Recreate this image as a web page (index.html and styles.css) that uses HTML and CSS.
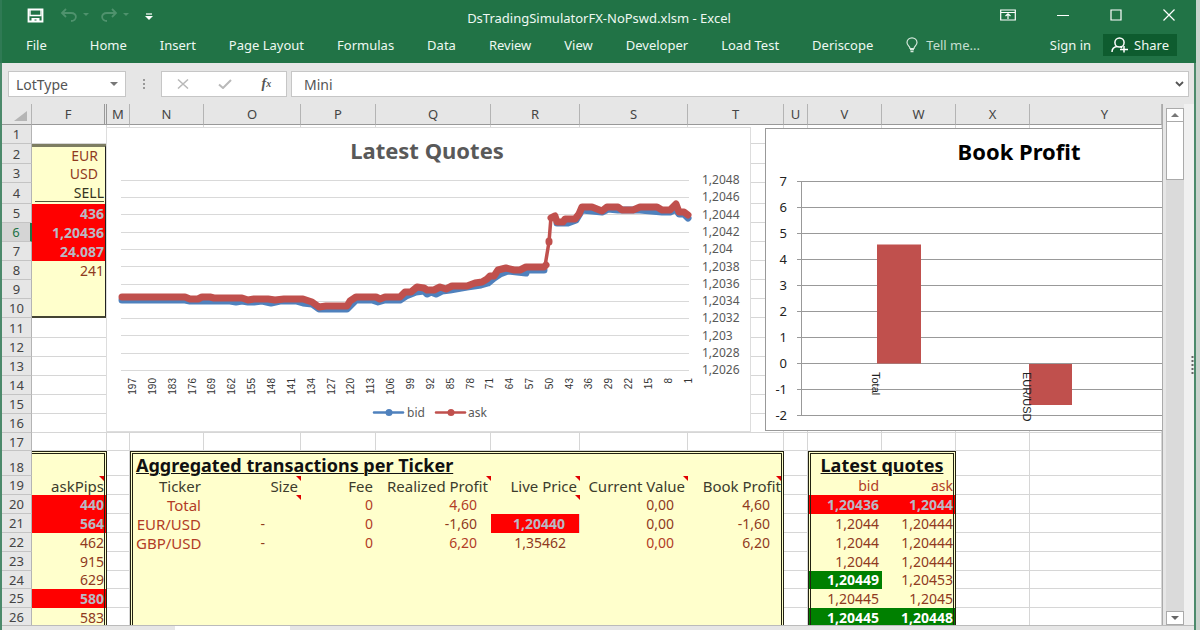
FILE: index.html
```html
<!DOCTYPE html>
<html lang="en">
<head>
<meta charset="utf-8">
<title>DsTradingSimulatorFX-NoPswd.xlsm - Excel</title>
<link rel="stylesheet" href="styles.css">
</head>
<body>
<div class="window">
  <header class="ribbon">
    <div class="titlebar">
      <div class="quick">
        <button aria-label="Save"><svg width="17" height="15" viewBox="0 0 17 15"><path d="M1.500 1.500h14v12h-14z" fill="none" stroke="#fff" stroke-width="1.800"/><path d="M3 1v6.500h11V1" fill="none" stroke="#fff" stroke-width="1.400"/><path d="M4.500 14v-4h8v4h-3v-2.500h-2V14z" fill="#fff"/></svg></button>
        <button aria-label="Undo" class="undo"><svg width="30" height="15" viewBox="0 0 30 15"><path d="M6 1L2 5l4 4M2 5h9c7 0 6 8 0 8" fill="none" stroke="#4f926d" stroke-width="1.800"/><path d="M23 5h6l-3 3z" fill="#4f926d"/></svg></button>
        <button aria-label="Redo"><svg width="30" height="15" viewBox="0 0 30 15"><path d="M12 1l4 4-4 4M16 5H7c-7 0-6 8 0 8" fill="none" stroke="#4f926d" stroke-width="1.800"/><path d="M23 5h6l-3 3z" fill="#4f926d"/></svg></button>
        <button aria-label="Customize toolbar" class="more"><svg width="8" height="8" viewBox="0 0 8 8"><path d="M1 1h6" stroke="#fff" stroke-width="1.200"/><path d="M0 3h8L4 7z" fill="#fff"/></svg></button>
      </div>
      <h1 class="title">DsTradingSimulatorFX-NoPswd.xlsm - Excel</h1>
      <div class="winbtns">
        <button aria-label="Ribbon options"><svg width="16" height="12" viewBox="0 0 16 12"><path d="M.7 1h14.600v10H.7zM1 3.500h14M8 10V5M5.500 7L8 4.800 10.500 7" fill="none" stroke="#fff" stroke-width="1.200"/></svg></button>
        <button aria-label="Minimize"><svg width="12" height="12" viewBox="0 0 12 12"><path d="M0 6.500h12" stroke="#fff"/></svg></button>
        <button aria-label="Maximize"><svg width="12" height="12" viewBox="0 0 12 12"><path d="M1 1h10v10H1z" fill="none" stroke="#fff" stroke-width="1.200"/></svg></button>
        <button aria-label="Close"><svg width="12" height="12" viewBox="0 0 12 12"><path d="M.5 .5l11 11M11.500 .5l-11 11" stroke="#fff" stroke-width="1.200"/></svg></button>
      </div>
    </div>
    <nav class="tabs">
      <button class="file">File</button><button>Home</button><button>Insert</button><button>Page Layout</button><button>Formulas</button><button>Data</button><button>Review</button><button>View</button><button>Developer</button><button>Load Test</button><button>Deriscope</button>
      <button class="tell"><svg width="12" height="16" viewBox="0 0 12 16"><path d="M4 11.500C4 9 1 8.500 1 5.500a5 4.700 0 0 1 10 0c0 3-3 3.500-3 6z" fill="none" stroke="#d5e8dc" stroke-width="1.200"/><path d="M4 12.500h4M4.500 14.500h3" stroke="#d5e8dc" stroke-width="1.300"/></svg>Tell me...</button>
      <button class="signin">Sign in</button>
      <button class="share"><svg width="18" height="16" viewBox="0 0 18 16"><circle cx="8.500" cy="5.500" r="4.600" fill="none" stroke="#fff" stroke-width="1.500"/><path d="M1 15c0-3 2-5 5-5.500M9.500 9.500l1.500 1.500M9 12.500h8M13 9v6.500" fill="none" stroke="#fff" stroke-width="1.500"/></svg>Share</button>
    </nav>
  </header>

  <div class="work">
    <div class="formula">
      <div class="namebox"><input aria-label="Name box" value="LotType"><button aria-label="Names"><svg width="8" height="4" viewBox="0 0 8 4"><path d="M0 0h8L4 4z" fill="#777"/></svg></button></div>
      <span class="dots"></span>
      <div class="fxbox">
        <button aria-label="Cancel"><svg width="12" height="10" viewBox="0 0 12 10"><path d="M1 .5l10 9M11 .5L1 9.500" stroke="#b9b9b9" stroke-width="1.500"/></svg></button>
        <button aria-label="Enter"><svg width="14" height="10" viewBox="0 0 14 10"><path d="M1 5.500L5 9l8-8" fill="none" stroke="#b9b9b9" stroke-width="2"/></svg></button>
        <button aria-label="Insert function" class="fx">f<sub>x</sub></button>
      </div>
      <div class="fbar"><input aria-label="Formula" value="Mini"><button aria-label="Expand"><svg width="9" height="6" viewBox="0 0 9 6"><path d="M1 1l3.500 3.500L8 1" fill="none" stroke="#555" stroke-width="1.800"/></svg></button></div>
    </div>

    <div class="main">
      <div class="sheet">
        <table>
          <colgroup><col class="c30"><col class="c75"><col class="c23"><col class="c74"><col class="c97"><col class="c75"><col class="c115"><col class="c89"><col class="c108"><col class="c96"><col class="c24"><col class="c74"><col class="c74"><col class="c74"><col></colgroup>
          <thead><tr><th class="corner"><svg width="14" height="12" viewBox="0 0 14 12"><path d="M13 1v10H0z" fill="#b5b5b5"/></svg></th><th class="dbl">F</th><th>M</th><th>N</th><th>O</th><th>P</th><th>Q</th><th>R</th><th>S</th><th>T</th><th>U</th><th>V</th><th>W</th><th>X</th><th class="last">Y</th></tr></thead>
          <tbody>
            <tr><th>1</th><td><td><td><td><td><td><td><td><td><td><td><td><td><td></tr>
            <tr class="h20"><th>2</th><td class="pos top in">EUR<td><td><td><td><td><td><td><td><td><td><td><td></tr>
            <tr><th>3</th><td class="pos in">USD<td><td><td><td><td><td><td><td><td><td><td><td></tr>
            <tr class="h21"><th>4</th><td class="pos sell"><span>SELL</span><td><td><td><td><td><td><td><td><td><td><td><td></tr>
            <tr><th>5</th><td class="pos red">436<td><td><td><td><td><td><td><td><td><td><td><td></tr>
            <tr><th class="cur">6</th><td class="pos red">1,20436<td><td><td><td><td><td><td><td><td><td><td><td></tr>
            <tr><th>7</th><td class="pos red">24.087<td><td><td><td><td><td><td><td><td><td><td><td></tr>
            <tr><th>8</th><td class="pos">241<td><td><td><td><td><td><td><td><td><td><td><td></tr>
            <tr><th>9</th><td class="pos"><td><td><td><td><td><td><td><td><td><td><td><td><td></tr>
            <tr><th>10</th><td class="pos end"><td><td><td><td><td><td><td><td><td><td><td><td><td></tr>
            <tr class="h20"><th>11</th><td><td><td><td><td><td><td><td><td><td><td><td><td><td></tr>
            <tr><th>12</th><td><td><td><td><td><td><td><td><td><td><td><td><td><td></tr>
            <tr><th>13</th><td><td><td><td><td><td><td><td><td><td><td><td><td><td></tr>
            <tr><th>14</th><td><td><td><td><td><td><td><td><td><td><td><td><td><td></tr>
            <tr><th>15</th><td><td><td><td><td><td><td><td><td><td><td><td><td><td></tr>
            <tr><th>16</th><td><td><td><td><td><td><td><td><td><td><td><td><td><td></tr>
            <tr class="h18"><th>17</th><td><td><td><td><td><td><td><td><td><td><td><td><td><td></tr>
            <tr class="h25"><th>18</th><td class="y bt br"><td><td class="y bt bl head" colspan="4">Aggregated transactions per Ticker<td class="y bt"><td class="y bt"><td class="y bt br"><td><td class="y bt bl br head mid" colspan="2">Latest quotes<td><td></tr>
            <tr><th>19</th><td class="y br lab note tight">askPips<td><td class="y bl lab">Ticker<td class="y lab note">Size<td class="y lab">Fee<td class="y lab note">Realized Profit<td class="y lab note">Live Price<td class="y lab note">Current Value<td class="y br lab note tight">Book Profit<td><td class="y bl rose">bid<td class="y br rose tight">ask<td><td></tr>
            <tr><th>20</th><td class="y br red tight">440<td><td class="y bl rose tick">Total<td class="y note"><td class="y rose">0<td class="y rose in2">4,60<td class="y note"><td class="y in2">0,00<td class="y br in3">4,60<td><td class="y bl red">1,20436<td class="y br red tight">1,2044<td><td></tr>
            <tr><th>21</th><td class="y br red tight">564<td><td class="y bl rose tick">EUR/USD<td class="y dash">-<td class="y rose">0<td class="y in2">-1,60<td class="red in2">1,20440<td class="y in2">0,00<td class="y br in3">-1,60<td><td class="y bl">1,2044<td class="y br tight">1,20444<td><td></tr>
            <tr><th>22</th><td class="y br tight">462<td><td class="y bl rose tick">GBP/USD<td class="y dash">-<td class="y rose">0<td class="y rose in2">6,20<td class="y in2">1,35462<td class="y rose in2">0,00<td class="y br in3">6,20<td><td class="y bl">1,2044<td class="y br tight">1,20444<td><td></tr>
            <tr><th>23</th><td class="y br tight">915<td><td class="y bl"><td class="y"><td class="y"><td class="y"><td class="y"><td class="y"><td class="y br"><td><td class="y bl">1,2044<td class="y br tight">1,20444<td><td></tr>
            <tr class="h18"><th>24</th><td class="y br tight">629<td><td class="y bl"><td class="y"><td class="y"><td class="y"><td class="y"><td class="y"><td class="y br"><td><td class="y bl green">1,20449<td class="y br tight">1,20453<td><td></tr>
            <tr><th>25</th><td class="y br red tight">580<td><td class="y bl"><td class="y"><td class="y"><td class="y"><td class="y"><td class="y"><td class="y br"><td><td class="y bl">1,20445<td class="y br tight">1,2045<td><td></tr>
            <tr><th>26</th><td class="y br tight">583<td><td class="y bl"><td class="y"><td class="y"><td class="y"><td class="y"><td class="y"><td class="y br"><td><td class="y bl green">1,20445<td class="y br green tight">1,20448<td><td></tr>
          </tbody>
        </table>

        <svg class="quotes" width="645" height="305" viewBox="106 127 645 305">
          <rect x="106" y="127" width="645" height="305" fill="#fff"/>
          <path d="M750.500 127v305M106 431.500h645M106 127.500h645M106.500 127v305" stroke="#ddd"/>
          <text class="ctitle" x="427" y="159" text-anchor="middle">Latest Quotes</text>
          <path d="M121 180.500h568M121 197.500h568M121 214.500h568M121 232.500h568M121 249.500h568M121 266.500h568M121 284.500h568M121 301.500h568M121 318.500h568M121 335.500h568M121 353.500h568M121 370.500h568" stroke="#d9d9d9"/>
          <g class="ylab">
            <text x="702" y="184">1,2048</text><text x="702" y="201">1,2046</text><text x="702" y="219">1,2044</text><text x="702" y="236">1,2042</text><text x="702" y="253">1,204</text><text x="702" y="271">1,2038</text><text x="702" y="288">1,2036</text><text x="702" y="305">1,2034</text><text x="702" y="322">1,2032</text><text x="702" y="340">1,203</text><text x="702" y="357">1,2028</text><text x="702" y="374">1,2026</text>
          </g>
          <g class="xlab">
            <text transform="translate(136 378) rotate(-90)">197</text><text transform="translate(156 378) rotate(-90)">190</text><text transform="translate(176 378) rotate(-90)">183</text><text transform="translate(196 378) rotate(-90)">176</text><text transform="translate(215 378) rotate(-90)">169</text><text transform="translate(235 378) rotate(-90)">162</text><text transform="translate(255 378) rotate(-90)">155</text><text transform="translate(275 378) rotate(-90)">148</text><text transform="translate(295 378) rotate(-90)">141</text><text transform="translate(315 378) rotate(-90)">134</text><text transform="translate(335 378) rotate(-90)">127</text><text transform="translate(354 378) rotate(-90)">120</text><text transform="translate(374 378) rotate(-90)">113</text><text transform="translate(394 378) rotate(-90)">106</text><text transform="translate(414 378) rotate(-90)">99</text><text transform="translate(434 378) rotate(-90)">92</text><text transform="translate(454 378) rotate(-90)">85</text><text transform="translate(474 378) rotate(-90)">78</text><text transform="translate(493 378) rotate(-90)">71</text><text transform="translate(513 378) rotate(-90)">64</text><text transform="translate(533 378) rotate(-90)">57</text><text transform="translate(553 378) rotate(-90)">50</text><text transform="translate(573 378) rotate(-90)">43</text><text transform="translate(592 378) rotate(-90)">36</text><text transform="translate(612 378) rotate(-90)">29</text><text transform="translate(632 378) rotate(-90)">22</text><text transform="translate(652 378) rotate(-90)">15</text><text transform="translate(672 378) rotate(-90)">8</text><text transform="translate(692 378) rotate(-90)">1</text>
          </g>
          <g fill="none" stroke-width="7" stroke-linecap="round" stroke-linejoin="round">
            <path stroke="#4f81bd" d="M122 300H185L190 301H230L236 302L242 301L248 302H254L262 301L271 303L280 301H296L303 303L312 304L319 309H347L351 305L356 300H372L378 302L385 300H400L406 296L416 292L424 291L427 294L431 292L436 294L442 291L450 290L467 287L481 285L488 283L494 278L500 274L508 271L526 273V270H544"/>
            <path stroke="#4f81bd" d="M557 223H568L576 220L582 210L602 212L608 209L618 210H640L662 212H670L676 209L679 214H684L688 218"/>
            <path stroke="#c0504d" stroke-width="3.500" d="M545 266L549 242L551 217"/>
            <path stroke="#c0504d" d="M122 297H185L190 299H198L202 297H210L214 298H242L248 300L254 299H268L275 300L284 299H303L312 302L319 307L326 306H347L350 301L356 297H376L380 299L385 297H400L405 292H411L417 287L424 288L427 290H434L440 287L446 289L452 286H467L475 283L482 282L487 279L490 276L494 276L498 270L506 268L514 270H520L526 267H544L546 265M549 241v1M551 218L555 216L557 222H563L565 219H575L579 214L582 207H592L602 211L607 207H618L622 210H633L640 207H657L662 210H670L676 204L679 212H684L688 215"/>
          </g>
          <path d="M374 412.500h29" stroke="#4f81bd" stroke-width="2.500" stroke-linecap="round"/><circle cx="389" cy="412.500" r="3.500" fill="#4f81bd"/>
          <path d="M436 412.500h29" stroke="#c0504d" stroke-width="2.500" stroke-linecap="round"/><circle cx="451" cy="412.500" r="3.500" fill="#c0504d"/>
          <text class="leg" x="407" y="417">bid</text><text class="leg" x="468" y="417">ask</text>
        </svg>

        <svg class="profit" width="398" height="303" viewBox="765 128 398 303">
          <rect x="765.500" y="128.500" width="398" height="302" fill="#fff" stroke="#999"/>
          <text class="btitle" x="1019" y="160" text-anchor="middle">Book Profit</text>
          <path d="M797 181.500h366M797 207.500h366M797 233.500h366M797 259.500h366M797 285.500h366M797 311.500h366M797 337.500h366M797 363.500h366M797 389.500h366M797 415.500h366M801.500 181v235" stroke="#999"/>
          <path d="M877 244.500h44v119h-44zM1029 364h43v41h-43z" fill="#c0504d"/>
          <g class="blab" text-anchor="end">
            <text x="787" y="186">7</text><text x="787" y="212">6</text><text x="787" y="238">5</text><text x="787" y="264">4</text><text x="787" y="290">3</text><text x="787" y="316">2</text><text x="787" y="342">1</text><text x="787" y="368">0</text><text x="787" y="394">-1</text><text x="787" y="420">-2</text>
          </g>
          <text class="cat" transform="translate(872 372) rotate(90)">Total</text>
          <text class="cat" transform="translate(1023 372) rotate(90)">EUR/USD</text>
        </svg>
      </div>
      <div class="vscroll">
        <button aria-label="Scroll up"><svg width="8" height="4" viewBox="0 0 8 4"><path d="M0 4h8L4 0z" fill="#777"/></svg></button>
        <div class="track"><div class="thumb"></div></div>
        <button aria-label="Scroll down"><svg width="8" height="4" viewBox="0 0 8 4"><path d="M0 0h8L4 4z" fill="#666"/></svg></button>
      </div>
      <div class="pane"><svg width="3" height="18" viewBox="0 0 3 18"><path d="M1.500 0v18" stroke="#666" stroke-width="2" stroke-dasharray="2 2"/></svg></div>
    </div>
    <footer class="sheets"><span class="active"></span></footer>
  </div>
</div>
</body>
</html>
```
FILE: styles.css
```css
* { box-sizing: border-box; }
body { margin: 0; background: #c9d3cd; font-family: "Noto Sans", sans-serif; }
button, input { font: inherit; color: inherit; background: none; border: 0; padding: 0; margin: 0; min-width: 0; }
button { display: flex; align-items: center; justify-content: center; white-space: nowrap; }
svg { display: block; flex: none; }

.window { height: 100vh; margin-right: 4px; display: flex; flex-direction: column; overflow: hidden; }
.ribbon { background: #217346; color: #eef8f2; border-left: 2px solid #2f7a54; height: 63px; flex: none; font-size: 13px; }
.titlebar { display: grid; grid-template-columns: 1fr auto 1fr; align-items: center; height: 34px; }
.quick { display: flex; align-items: center; gap: 10px; padding: 0 0 4px 25px; }
.quick .undo { margin-left: 6px; }
.quick .more { padding: 4px 0 0 5px; }
.title { margin: 0; font-size: 13px; font-weight: 400; padding-top: 2px; }
.winbtns { display: flex; justify-content: flex-end; align-items: center; gap: 41px; padding: 0 21px 4px 0; }
.tabs { display: flex; align-items: center; gap: 33px; padding: 0 19px 0 24px; height: 22px; }
.tabs .file { margin-right: 10px; }
.tabs .tell { gap: 8px; color: #c5dfd0; }
.tabs .signin { margin-left: auto; }
.tabs .share { background: #0e5c2f; height: 22px; padding: 0 8px; gap: 5px; margin-left: -21px; }

.work { flex: 1; min-height: 0; display: flex; flex-direction: column; background: #e6e6e6; border-left: 2px solid #4c8a6b; border-right: 2px solid #4c8a6b; }
.formula { display: flex; align-items: center; height: 41px; flex: none; padding: 1px 5px 0 6px; font-size: 14px; color: #555; }
.namebox, .fxbox, .fbar { display: flex; align-items: center; height: 26px; background: #fff; border: 1px solid #c6c6c6; }
.namebox { width: 118px; padding: 0 7px; }
.namebox input, .fbar input { flex: 1; }
.dots { width: 35px; height: 12px; background: radial-gradient(circle, #999 1px, transparent 1px) center / 4px 4px repeat-y; }
.fxbox { width: 126px; justify-content: space-around; }
.fx { font: italic bold 14px "Liberation Serif", serif; }
.fx sub { font-size: 10px; line-height: 8px; }
.fbar { flex: 1; margin-left: 4px; padding: 0 4px 0 12px; }

.main { flex: 1; min-height: 0; display: flex; }
.sheet { flex: 1; position: relative; overflow: hidden; background: #fff; border-right: 1px solid #aaa; }
table { width: 100%; table-layout: fixed; border-collapse: separate; border-spacing: 0; font-size: 14px; line-height: 16px; }
.c30 { width: 30px; } .c23 { width: 23px; } .c24 { width: 24px; } .c74 { width: 74px; } .c97 { width: 97px; } .c75 { width: 75px; }
.c115 { width: 115px; } .c89 { width: 89px; } .c108 { width: 108px; } .c96 { width: 96px; }
tr { height: 19px; }
.h18 { height: 18px; } .h20 { height: 20px; } .h21 { height: 21px; } .h25 { height: 25px; }
.h25 th { vertical-align: bottom; }
thead tr { height: 21px; }
th { background: #e6e6e6; color: #444; font-size: 13px; font-weight: 400; padding: 0; border-right: 1px solid #b4b4b4; border-bottom: 1px solid #c4c4c4; }
thead th { border-bottom-color: #999; }
thead .dbl { border-right: 3px double #999; }
thead .last { padding-left: 18px; }
.corner svg { margin: 3px 0 0 12px; }
.cur { background: #d5d5d5; color: #217346; border-right: 2px solid #217346; }
td { position: relative; padding: 0 3px; text-align: right; white-space: nowrap; color: #8f3a1e; border-right: 1px solid #d6d6d6; border-bottom: 1px solid #d6d6d6; }
td:empty { padding: 0; }
.pos, .y { background: #ffffcc; border-color: transparent; }
.pos { padding-right: 1px; border-right: 2px solid #222; border-bottom: 0; }
.top { border-top: 3px solid #7d7d62; }
.in { padding-right: 7px; }
.sell { color: #333322; }
.sell span { display: block; border-bottom: 1px solid #55553a; }
.end { border-bottom: 2px solid #444433; }
.y { border-right: 0; border-bottom: 0; }
.bt { border-top: 3px double #222211; }
.bl { border-left: 3px double #222211; }
.br { border-right: 3px double #222211; }
.lab { color: #3c3c2c; font-size: 15px; }
.rose { color: #b23c26; }
.tick { font-size: 15px; }
.red { background: #ff0000; color: #b9b9c4; font-weight: 700; border-bottom: 0; }
.green { background: #008000; color: #fff; font-weight: 700; }
.head { text-align: left; font-size: 18px; line-height: 20px; font-weight: 700; color: #111; text-decoration: underline; text-decoration-thickness: 1px; }
.mid { text-align: center; }
.in2 { padding-right: 14px; }
.in3 { padding-right: 11px; }
.dash { padding-right: 36px; }
.tight { padding-right: 0; }
.note::after { content: ""; position: absolute; top: 0; right: 0; border-top: 5px solid #e00000; border-left: 5px solid transparent; }

/* charts float above the cells */
.quotes { position: absolute; left: 104px; top: 23px; }
.profit { position: absolute; left: 763px; top: 24px; }
.ctitle { font-size: 22px; font-weight: 700; fill: #595959; }
.btitle { font-size: 22px; font-weight: 700; fill: #000; }
.ylab, .leg { font-size: 12px; fill: #595959; }
.xlab { font-size: 10px; fill: #333; text-anchor: end; font-family: "Liberation Sans", sans-serif; }
.blab { font-size: 13px; fill: #222; }
.cat { font-size: 11px; fill: #222; font-family: "Liberation Sans", sans-serif; }

.vscroll { width: 18px; margin: 4px 0 0 3px; display: flex; flex-direction: column; background: #dadada; }
.vscroll button { height: 14px; background: #fff; border: 1px solid #aaa; }
.track { flex: 1; }
.thumb { height: 58px; background: #fff; border: 1px solid #aaa; border-top: 0; }
.pane { width: 10px; background: #f0f0f0; display: flex; align-items: center; justify-content: flex-end; }
.sheets { height: 5px; flex: none; padding-left: 173px; border-top: 1px solid #bbb; }
.active { display: block; width: 115px; height: 5px; background: #fff; }
```
